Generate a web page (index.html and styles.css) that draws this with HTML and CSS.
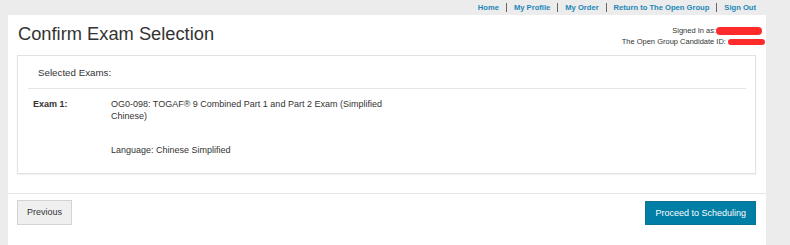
FILE: index.html
```html
<!DOCTYPE html>
<html lang="en">
<head>
    <meta charset="UTF-8">
    <meta name="viewport" content="width=device-width, initial-scale=1.0">
    <title>Confirm Exam Selection</title>
    <link rel="stylesheet" href="styles.css">
</head>
<body>
    <div class="page">
        <!-- Menu atas -->
        <div class="topnav">
            <a href="#">Home</a><span class="sep"></span>
            <a href="#">My Profile</a><span class="sep"></span>
            <a href="#">My Order</a><span class="sep"></span>
            <a href="#">Return to The Open Group</a><span class="sep"></span>
            <a href="#">Sign Out</a>
        </div>

        <div class="panel">
            <div class="header">
                <h1>Confirm Exam Selection</h1>
                <div class="user-info">
                    <div>Signed In as:<span class="redact redact-name"></span></div>
                    <div>The Open Group Candidate ID: <span class="redact redact-id"></span></div>
                </div>
            </div>

            <div class="exam-box">
                <div class="exam-box-title">Selected Exams:</div>
                <div class="exam-row">
                    <div class="exam-label">Exam 1:</div>
                    <div class="exam-value">
                        <div class="exam-name">OG0-098: TOGAF&reg; 9 Combined Part 1 and Part 2 Exam (Simplified Chinese)</div>
                        <div class="exam-lang">Language: Chinese Simplified</div>
                    </div>
                </div>
            </div>

            <div class="footer">
                <button class="btn btn-default">Previous</button>
                <button class="btn btn-primary">Proceed to Scheduling</button>
            </div>
        </div>
    </div>
</body>
</html>
```

FILE: styles.css
```css
body {
    font-family: "Liberation Sans", Arial, sans-serif;
    background-color: #ececec;
    color: #333;
    margin: 0;
    padding: 0;
}
.page {
    width: 758px;
    margin-left: 8px;
}
.topnav {
    display: flex;
    justify-content: flex-end;
    align-items: center;
    height: 15px;
    padding-right: 10px;
    font-size: 7.6px;
    font-weight: bold;
}
.topnav a {
    color: #2287b8;
    text-decoration: none;
}
.topnav .sep {
    display: inline-block;
    width: 1px;
    height: 9px;
    background-color: #666;
    margin: 0 7px;
}
.panel {
    background-color: #fff;
    min-height: 230px;
}
.header {
    display: flex;
    justify-content: space-between;
    padding: 0 1px 0 10px;
}
h1 {
    font-size: 18.3px;
    font-weight: normal;
    line-height: 20px;
    margin: 9px 0 0 0;
}
.user-info {
    font-size: 7.5px;
    line-height: 11px;
    text-align: right;
    margin-top: 9.5px;
}
.redact {
    display: inline-block;
    background-color: #ff2b2b;
    border-radius: 4px;
    vertical-align: middle;
}
.redact-name {
    width: 46px;
    height: 8px;
    margin-right: 3px;
}
.redact-id {
    width: 37px;
    height: 6px;
}
.exam-box {
    margin: 8px 10px 0 9px;
    padding: 0 9px 16.5px 10px;
    border: 1px solid #e2e2e2;
    box-shadow: 0 1px 1px rgba(0, 0, 0, 0.05);
}
.exam-box-title {
    font-size: 9.75px;
    line-height: 20px;
    padding: 7px 10px 5px;
    border-bottom: 1px solid #e5e5e5;
}
.exam-row {
    display: flex;
    font-size: 9px;
    line-height: 12.86px;
    padding: 9px 0 0 5px;
}
.exam-label {
    width: 78px;
    font-weight: bold;
}
.exam-value {
    width: 275px;
}
.exam-lang {
    margin-top: 20.5px;
}
.footer {
    display: flex;
    justify-content: space-between;
    margin-top: 18.5px;
    padding: 6px 10px 0 9px;
    border-top: 1px solid #e5e5e5;
}
.btn {
    font-family: "Liberation Sans", Arial, sans-serif;
    font-size: 9px;
    height: 25px;
    padding: 0 9px;
    cursor: pointer;
}
.btn-default {
    background-color: #efefef;
    border: 1px solid #d3d3d3;
    color: #333;
}
.btn-primary {
    background-color: #007ea5;
    border: 1px solid #0a7396;
    color: #fff;
    margin-top: 1px;
    height: 24px;
}
```
